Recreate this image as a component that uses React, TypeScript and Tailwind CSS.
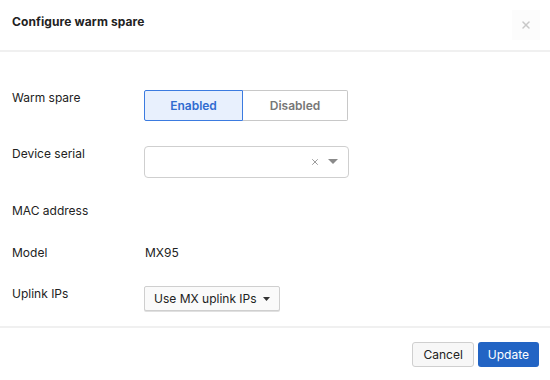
import { X } from 'lucide-react'

const font = { fontFamily: 'Inter, "Noto Sans", sans-serif' }

function Row({ label, children, className = '' }: { label: string; children?: React.ReactNode; className?: string }) {
  return (
    <div className={`flex items-start ${className}`}>
      <div className="w-[132px] text-[12px] leading-[16px] text-[#222]">{label}</div>
      <div className="flex-1">{children}</div>
    </div>
  )
}

export default function App() {
  return (
    <div className="w-[550px] h-[380px] bg-white flex flex-col" style={font}>
      {/* header */}
      <div className="h-[52px] flex items-start justify-between border-b-2 border-[#f0f0f0]">
        <h1 className="pl-3 pt-[13px] text-[12px] font-bold text-[#222] tracking-[0.1px]">Configure warm spare</h1>
        <button className="mt-[10px] mr-[10px] w-[28px] h-[30px] bg-[#fcfcfc] flex items-center justify-center text-[#c8c8c8]">
          <X className="w-3 h-3" strokeWidth={3} />
        </button>
      </div>

      {/* body */}
      <div className="flex-1 px-3 pt-[38px]">
        <Row label="Warm spare" className="h-[31px]">
          <div className="flex w-[204px] h-[31px] text-[12px] font-semibold">
            <div className="w-[99px] flex items-center justify-center border border-[#3b7be0] bg-[#e8f0fd] text-[#2f6bd0] rounded-l-[2px]">
              Enabled
            </div>
            <div className="flex-1 flex items-center justify-center border border-l-0 border-[#c8c8c8] text-[#777] rounded-r-[2px]">
              Disabled
            </div>
          </div>
        </Row>

        <Row label="Device serial" className="h-[32px] mt-[25px]">
          <div className="w-[205px] h-[32px] border border-[#cfcfcf] rounded-[4px] flex items-center justify-end pr-[10px] gap-[8px] text-[#888]">
            <X className="w-[10px] h-[10px]" strokeWidth={2} />
            <svg width="10" height="6" viewBox="0 0 10 6"><path d="M0 0h10L5 5z" fill="#8a8a8a" /></svg>
          </div>
        </Row>

        <Row label="MAC address" className="h-[20px] mt-[25px]" />

        <Row label="Model" className="h-[20px] mt-[22px]">
          <div className="text-[12px] leading-[16px] text-[#222] pl-px">MX95</div>
        </Row>

        <Row label="Uplink IPs" className="h-[25px] mt-[21px]">
          <button className="h-[25px] px-[9px] border border-[#cfcfcf] rounded-[2px] bg-[#fafafa] text-[12px] text-[#222] flex items-center gap-[6px] shadow-[0_1px_0_#e0e0e0]">
            Use MX uplink IPs
            <svg width="7" height="4" viewBox="0 0 7 4"><path d="M0 0h7L3.5 4z" fill="#333" /></svg>
          </button>
        </Row>
      </div>

      {/* footer */}
      <div className="h-[54px] border-t-2 border-[#f0f0f0] flex items-start justify-end gap-[4px] pr-[11px] pt-[14px]">
        <button className="h-[25px] px-[10px] border border-[#cfcfcf] rounded-[3px] bg-[#f7f7f7] text-[12px] text-[#222]">
          Cancel
        </button>
        <button className="h-[25px] px-[10px] rounded-[3px] bg-[#2264c4] text-[12px] text-white">
          Update
        </button>
      </div>
    </div>
  )
}
